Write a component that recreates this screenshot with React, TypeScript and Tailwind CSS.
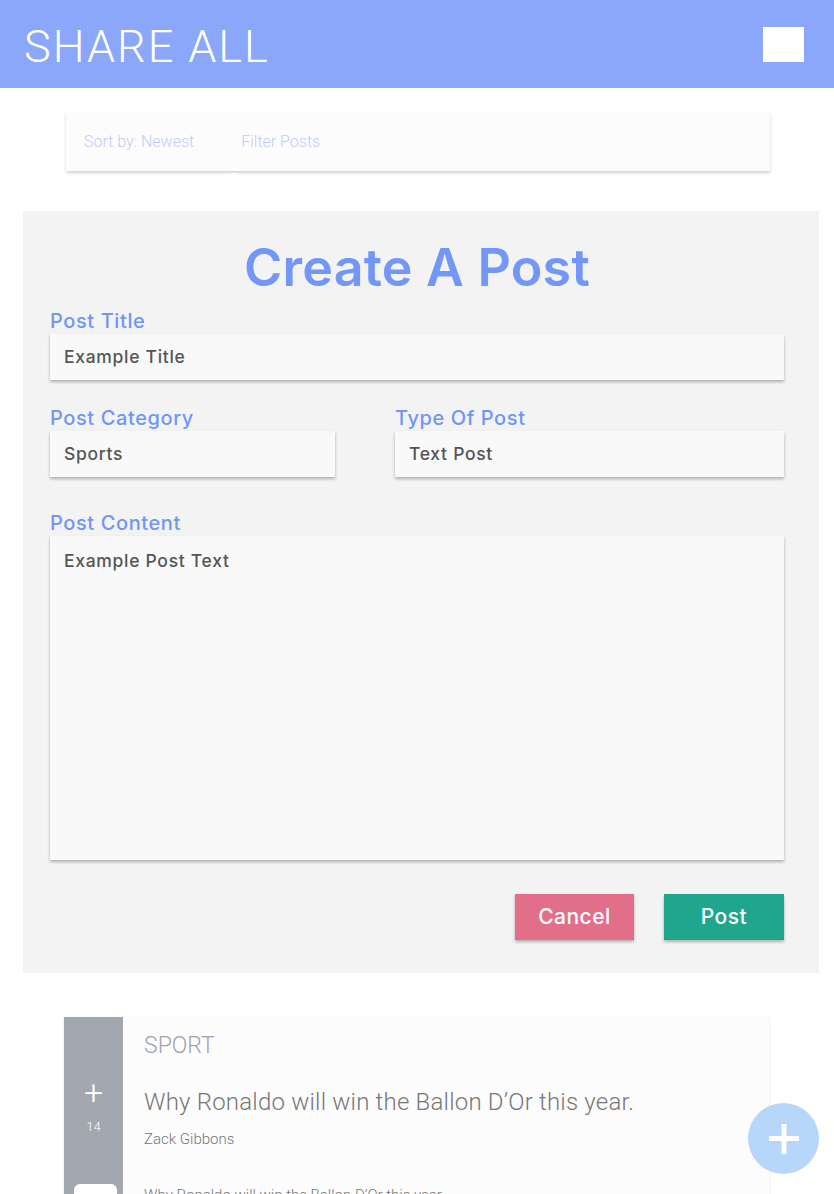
import React from 'react';

const montserrat = { fontFamily: 'Inter, "Noto Sans", sans-serif' };

const Field: React.FC<{ label: string; value: string; className?: string; tall?: boolean }> = ({
  label,
  value,
  className = '',
  tall = false,
}) => (
  <div className={className}>
    <div className="text-[20px] leading-[22px] font-medium tracking-[0.6px] text-[#7096f6]">{label}</div>
    <div
      className={`mt-[2px] bg-[#f9f9f9] shadow-[0_2px_3px_rgba(0,0,0,0.28)] px-[14px] text-[17.5px] font-medium tracking-[0.7px] text-[#555] ${
        tall ? 'h-[324px] pt-[12px]' : 'h-[46px] flex items-center'
      }`}
    >
      {value}
    </div>
  </div>
);

const App: React.FC = () => {
  return (
    <div className="w-[834px] h-[1194px] overflow-hidden bg-white relative" style={{ fontFamily: 'Roboto, sans-serif' }}>
      {/* header */}
      <div className="h-[88px] bg-[#8aa7f9] flex items-center justify-between pl-[24px] pr-[30px]">
        <div className="text-white text-[45px] font-light tracking-[2px] leading-none mt-[4px]">SHARE ALL</div>
        <div className="w-[41px] h-[35px] bg-white" />
      </div>

      {/* sort bar */}
      <div className="relative mx-[66px] mt-[24px] w-[704px] h-[59px] bg-[#fcfcfc] shadow-[0_2px_3px_rgba(0,0,0,0.18)] flex items-center pl-[18px] gap-[47px] text-[16px] font-light text-[#bfcbf8]">
        <span>Sort by: Newest</span>
        <span>Filter Posts</span>
        <div className="absolute left-[162px] top-[61px] w-[13px] h-[13px] rounded-full bg-white" />
      </div>

      {/* create post panel */}
      <div className="mx-[23px] mt-[40px] w-[796px] bg-[#f3f3f3] pl-[27px] pr-[35px] pt-[27px] pb-[33px]" style={montserrat}>
        <h1 className="text-center text-[52px] leading-[60px] font-semibold tracking-[0.2px] text-[#7397f6]">Create A Post</h1>
        <Field label="Post Title" value="Example Title" className="mt-[12px]" />
        <div className="flex gap-[60px] mt-[27px]">
          <Field label="Post Category" value="Sports" className="w-[285px]" />
          <Field label="Type Of Post" value="Text Post" className="flex-1" />
        </div>
        <Field label="Post Content" value="Example Post Text" className="mt-[35px]" tall />
        <div className="flex justify-end gap-[30px] mt-[34px]">
          <button className="w-[119px] h-[46px] bg-[#e26f89] text-white text-[21px] font-medium tracking-[0.5px] shadow-[0_2px_3px_rgba(0,0,0,0.28)]">
            Cancel
          </button>
          <button className="w-[120px] h-[46px] bg-[#1fa68c] text-white text-[21px] font-medium tracking-[0.5px] shadow-[0_2px_3px_rgba(0,0,0,0.28)]">
            Post
          </button>
        </div>
      </div>

      {/* post card */}
      <div className="mx-[64px] mt-[44px] w-[705px] flex bg-[#fcfcfc] shadow-[0_1px_3px_rgba(0,0,0,0.12)]">
        <div className="w-[59px] bg-[#a3a7b0] flex flex-col items-center pt-[58px] h-[200px] relative">
          <div className="text-white text-[34px] font-light leading-none">+</div>
          <div className="text-white text-[13px] font-light mt-[8px]">14</div>
          <div className="absolute left-[10px] top-[167px] w-[43px] h-[30px] rounded-[6px] bg-white" />
        </div>
        <div className="flex-1 pl-[21px] pt-[14px] text-[#777]">
          <div className="text-[23px] font-light text-[#a0a3ab] leading-[30px]">SPORT</div>
          <div className="text-[24px] font-light leading-[30px] mt-[26px] tracking-[0.2px]">
            Why Ronaldo will win the Ballon D’Or this year.
          </div>
          <div className="text-[15px] font-light mt-[11px]">Zack Gibbons</div>
          <div className="text-[15px] font-light mt-[33px]">Why Ronaldo will win the Ballon D’Or this year.</div>
        </div>
      </div>

      {/* floating add button */}
      <div className="absolute left-[748px] top-[1103px] w-[71px] h-[71px] rounded-full bg-[#a9cff9]/85 flex items-center justify-center">
        <svg width="30" height="30" viewBox="0 0 30 30">
          <rect x="0" y="12" width="30" height="5" fill="white" />
          <rect x="12.5" y="0" width="5" height="30" fill="white" />
        </svg>
      </div>
    </div>
  );
};

export default App;
